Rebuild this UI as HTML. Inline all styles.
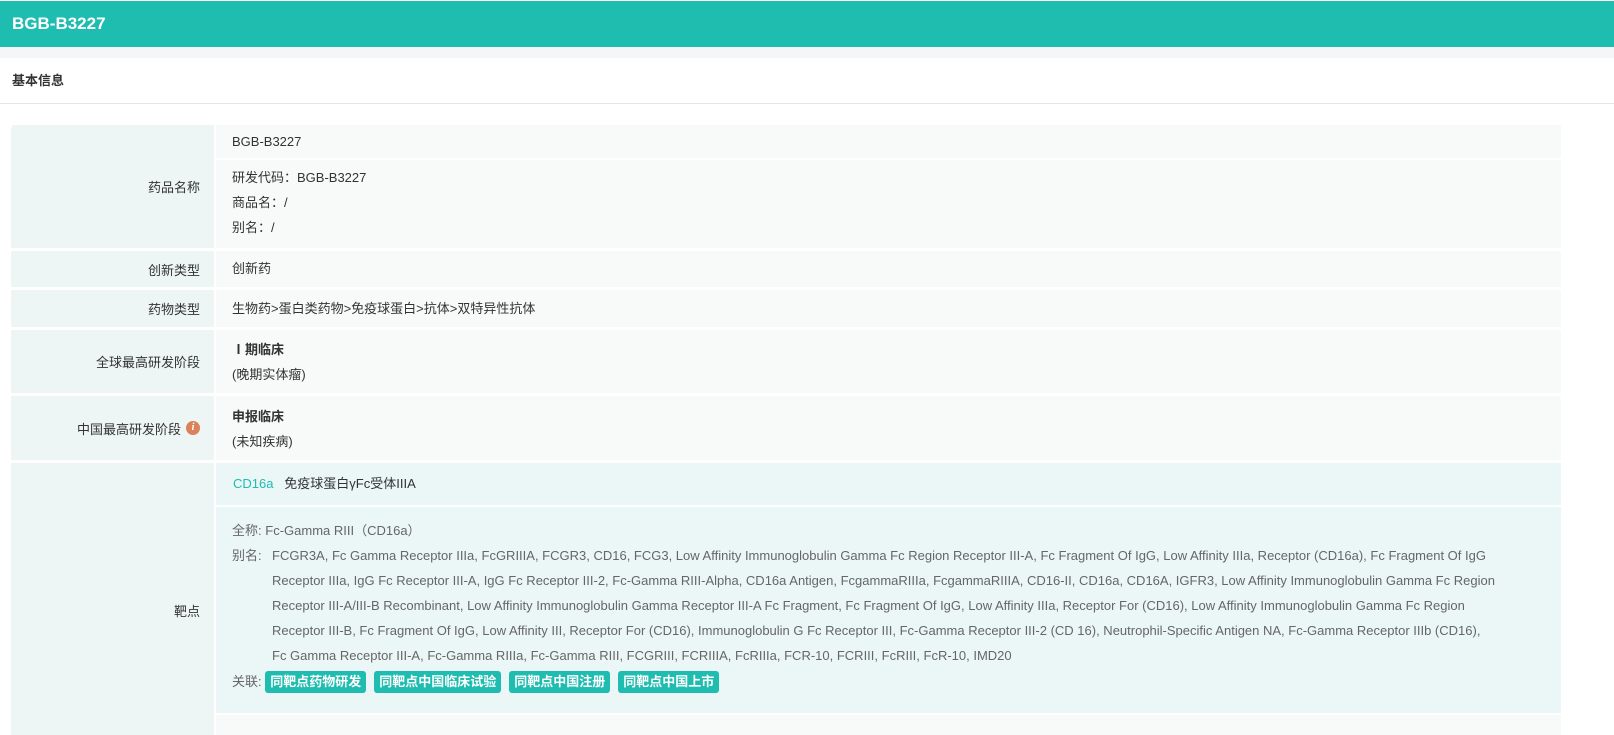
<!DOCTYPE html>
<html><head><meta charset="utf-8"><style>
*{margin:0;padding:0;box-sizing:border-box}
body{width:1614px;height:735px;overflow:hidden;background:#fff;font-family:"Liberation Sans","Noto Sans CJK SC",sans-serif;color:#333;font-size:13px}
.hd{position:absolute;top:1px;left:0;width:1614px;height:46px;background:#1fbcb0;color:#fff;font-weight:bold;font-size:17px;line-height:46px;padding-left:12px}
.gap{position:absolute;top:47px;left:0;width:1614px;height:11px;background:#f5f6f8}
.sec{position:absolute;top:58px;left:0;width:1614px;height:46px;border-bottom:1px solid #e6e6e6;font-weight:bold;font-size:13px;line-height:46px;padding-left:12px}
.row{position:absolute;left:11px;width:1550px}
.lb{position:absolute;left:0;top:0;bottom:0;width:203px;background:#edf5f5;text-align:right;padding-right:14px;display:flex;align-items:center;justify-content:flex-end}
.vl{position:absolute;left:205px;right:0;top:0;bottom:0;background:#f8fafa;padding-left:16px}
.b{font-weight:bold}
.g{color:#666}
.tag{display:inline-block;background:#1fbcb0;color:#fff;font-weight:bold;border-radius:3px;padding:0 5px;height:22px;line-height:22px;margin-right:8px}
</style></head><body>
<div class="hd">BGB-B3227</div>
<div class="gap"></div>
<div class="sec">基本信息</div>

<div class="row" style="top:125px;height:123px">
 <div class="lb" style="border-top-left-radius:4px">药品名称</div>
 <div class="vl" style="background:none;padding:0">
  <div style="position:absolute;left:0;right:0;top:0;height:33px;background:#f8fafa;padding-left:16px;line-height:33px">BGB-B3227</div>
  <div style="position:absolute;left:0;right:0;top:35px;bottom:0;background:#f8fafa;padding:5px 0 0 16px;line-height:25px">研发代码：BGB-B3227<br>商品名：/<br>别名：/</div>
 </div>
</div>
<div class="row" style="top:251px;height:36px"><div class="lb">创新类型</div><div class="vl" style="line-height:36px">创新药</div></div>
<div class="row" style="top:290px;height:37px"><div class="lb">药物类型</div><div class="vl" style="line-height:37px">生物药&gt;蛋白类药物&gt;免疫球蛋白&gt;抗体&gt;双特异性抗体</div></div>
<div class="row" style="top:330px;height:63px"><div class="lb">全球最高研发阶段</div><div class="vl" style="padding-top:7px;line-height:25px"><span class="b">Ⅰ期临床</span><br>(晚期实体瘤)</div></div>
<div class="row" style="top:396px;height:64px"><div class="lb">中国最高研发阶段<span style="display:inline-block;width:14px;height:14px;border-radius:50%;background:#d9825b;color:#fff;font-size:10px;font-style:italic;font-weight:bold;text-align:center;line-height:14px;margin-left:5px;font-family:'Liberation Serif',serif">i</span></div><div class="vl" style="padding-top:8px;line-height:25px"><span class="b">申报临床</span><br>(未知疾病)</div></div>
<div class="row" style="top:463px;height:272px"><div class="lb" style="align-items:flex-start;padding-top:138px">靶点</div>
 <div class="vl" style="background:none;padding:0">
  <div style="position:absolute;left:0;right:0;top:0;height:42px;background:#ebf7f7;padding-left:17px;line-height:42px"><span style="color:#1fbcb0">CD16a</span>&nbsp;&nbsp; 免疫球蛋白γFc受体IIIA</div>
  <div style="position:absolute;left:0;right:0;top:44px;height:206px;background:#ebf7f7;padding:11px 0 0 16px;line-height:25px;white-space:nowrap;overflow:hidden">
   <div><span class="g">全称:</span> <span class="g">Fc-Gamma RIII（CD16a）</span></div>
   <div style="display:flex"><span class="g" style="width:40px;flex:none">别名:</span><span class="g">FCGR3A, Fc Gamma Receptor IIIa, FcGRIIIA, FCGR3, CD16, FCG3, Low Affinity Immunoglobulin Gamma Fc Region Receptor III-A, Fc Fragment Of IgG, Low Affinity IIIa, Receptor (CD16a), Fc Fragment Of IgG<br>Receptor IIIa, IgG Fc Receptor III-A, IgG Fc Receptor III-2, Fc-Gamma RIII-Alpha, CD16a Antigen, FcgammaRIIIa, FcgammaRIIIA, CD16-II, CD16a, CD16A, IGFR3, Low Affinity Immunoglobulin Gamma Fc Region<br>Receptor III-A/III-B Recombinant, Low Affinity Immunoglobulin Gamma Receptor III-A Fc Fragment, Fc Fragment Of IgG, Low Affinity IIIa, Receptor For (CD16), Low Affinity Immunoglobulin Gamma Fc Region<br>Receptor III-B, Fc Fragment Of IgG, Low Affinity III, Receptor For (CD16), Immunoglobulin G Fc Receptor III, Fc-Gamma Receptor III-2 (CD 16), Neutrophil-Specific Antigen NA, Fc-Gamma Receptor IIIb (CD16),<br>Fc Gamma Receptor III-A, Fc-Gamma RIIIa, Fc-Gamma RIII, FCGRIII, FCRIIIA, FcRIIIa, FCR-10, FCRIII, FcRIII, FcR-10, IMD20</span></div>
   <div style="margin-top:1px"><span class="g">关联:</span> <span class="tag">同靶点药物研发</span><span class="tag">同靶点中国临床试验</span><span class="tag">同靶点中国注册</span><span class="tag">同靶点中国上市</span></div>
  </div>
  <div style="position:absolute;left:0;right:0;top:252px;bottom:0;background:#f8fafa"></div>
 </div>
</div>
</body></html>
